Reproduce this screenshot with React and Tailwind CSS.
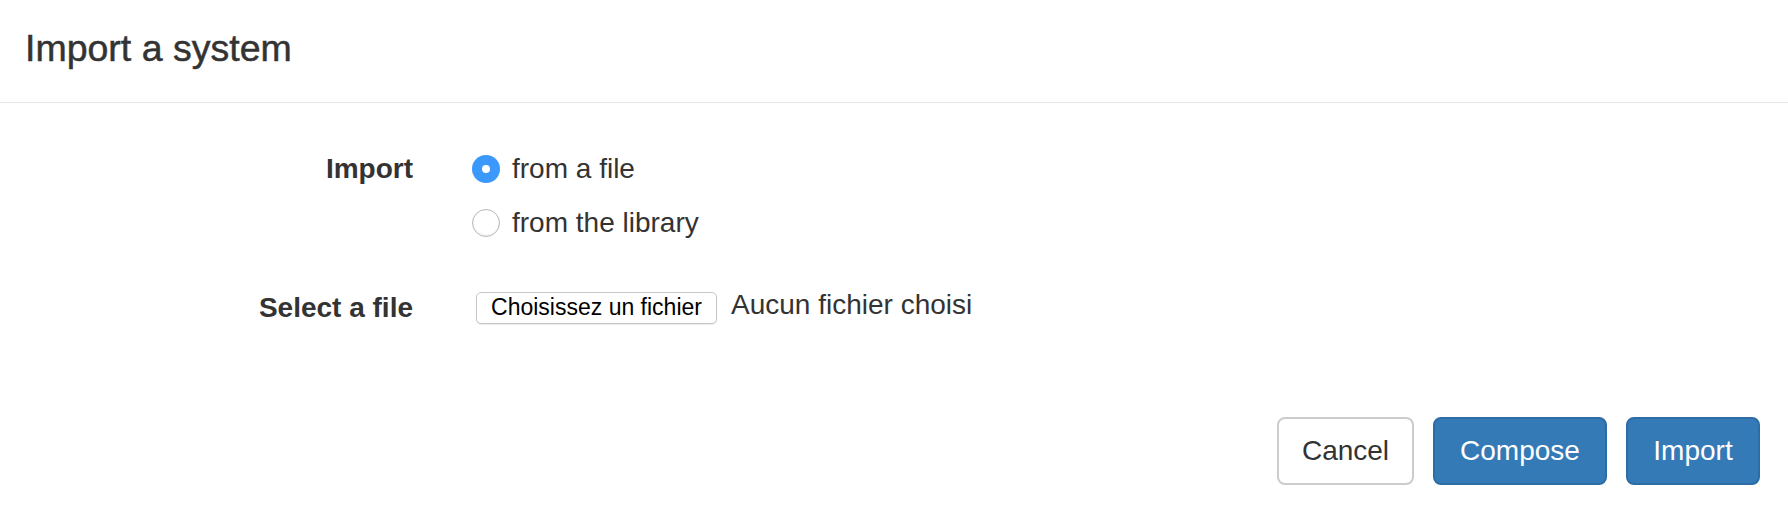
import React, { useState } from "react";

const Radio = ({ checked, label, onSelect }) => (
  <label className="flex items-center h-[40px] cursor-pointer" onClick={onSelect}>
    {checked ? (
      <span className="w-[28px] h-[28px] rounded-full bg-[#3c99fc] flex items-center justify-center">
        <span className="w-[8px] h-[8px] rounded-full bg-white" />
      </span>
    ) : (
      <span className="w-[28px] h-[28px] rounded-full bg-white border border-[#b8b8b8] shadow-[inset_0_-1px_2px_rgba(0,0,0,0.08)]" />
    )}
    <span className="ml-[12px] text-[28px] leading-[40px]">{label}</span>
  </label>
);

const App = () => {
  const [source, setSource] = useState("file");

  return (
    <div
      className="w-full h-[508px] overflow-hidden bg-white text-[#333]"
      style={{ fontFamily: '"Liberation Sans", Arial, sans-serif' }}
    >
      {/* Header */}
      <div className="border-b border-[#e5e5e5] px-[25px] pt-[30px] pb-[34px]">
        <h4 className="text-[37.5px] leading-none font-normal [-webkit-text-stroke:0.5px_#333]">
          Import a system
        </h4>
      </div>

      {/* Body */}
      <div className="pt-[46px]">
        <div className="grid grid-cols-[413px_1fr] gap-x-[59px]">
          <div className="text-right font-bold text-[28px] leading-[40px]">Import</div>
          <div className="flex flex-col gap-[14px]">
            <Radio
              checked={source === "file"}
              label="from a file"
              onSelect={() => setSource("file")}
            />
            <Radio
              checked={source === "library"}
              label="from the library"
              onSelect={() => setSource("library")}
            />
          </div>
        </div>

        <div className="grid grid-cols-[413px_1fr] gap-x-[63px] mt-[45px]">
          <div className="text-right font-bold text-[28px] leading-[40px]">Select a file</div>
          <div className="flex items-center h-[40px]">
            <button
              type="button"
              className="w-[241px] h-[32px] flex items-center justify-center bg-white border border-[#c6c6c6] rounded-[5px] shadow-[0_1px_1px_rgba(0,0,0,0.08)] text-[23px] text-black"
            >
              Choisissez un fichier
            </button>
            <span className="ml-[14px] mb-[6px] text-[28px]">Aucun fichier choisi</span>
          </div>
        </div>
      </div>

      {/* Footer */}
      <div className="flex justify-end gap-[19px] pr-[28px] pt-[89px] pb-[23px]">
        <button
          type="button"
          className="w-[137px] h-[68px] bg-white border-2 border-[#cccccc] rounded-[8px] text-[28px] text-[#333]"
        >
          Cancel
        </button>
        <button
          type="button"
          className="w-[174px] h-[68px] bg-[#337ab7] border-2 border-[#2e6da4] rounded-[8px] text-[28px] text-white"
        >
          Compose
        </button>
        <button
          type="button"
          className="w-[134px] h-[68px] bg-[#337ab7] border-2 border-[#2e6da4] rounded-[8px] text-[28px] text-white"
        >
          Import
        </button>
      </div>
    </div>
  );
};

export default App;
